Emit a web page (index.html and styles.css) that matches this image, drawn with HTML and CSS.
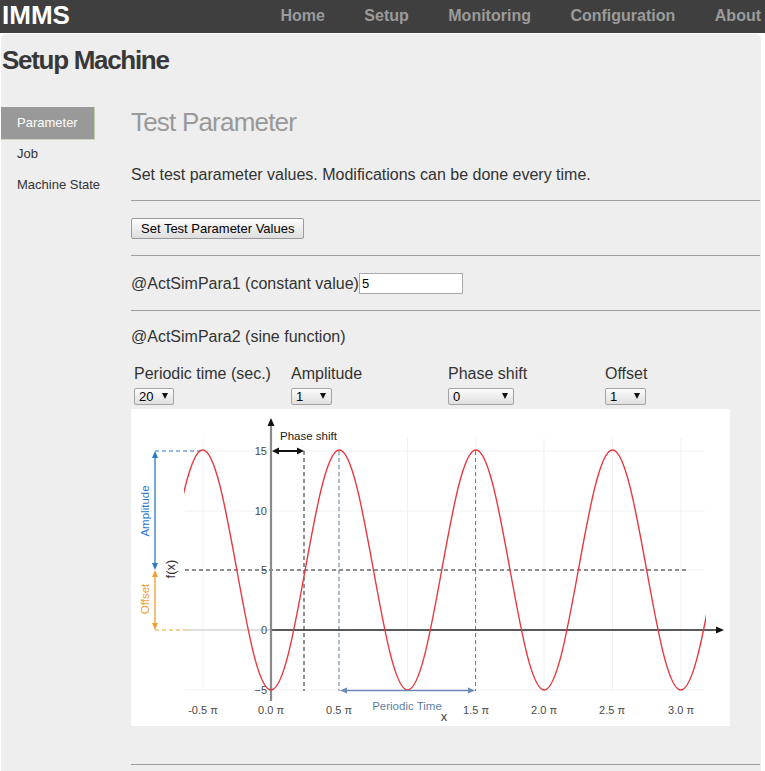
FILE: index.html
```html
<!DOCTYPE html>
<html lang="en">
<head>
<meta charset="utf-8">
<title>IMMS - Setup Machine</title>
<link rel="stylesheet" href="styles.css">
</head>
<body>
<header class="topbar">
  <div class="brand">IMMS</div>
  <nav class="nav">
    <a href="#">Home</a>
    <a href="#">Setup</a>
    <a href="#">Monitoring</a>
    <a href="#">Configuration</a>
    <a href="#">About</a>
  </nav>
</header>
<main class="panel">
  <h1 class="page-title">Setup Machine</h1>
  <div class="layout">
    <ul class="sidenav">
      <li class="sidenav-item active">Parameter</li>
      <li class="sidenav-item">Job</li>
      <li class="sidenav-item">Machine State</li>
    </ul>
    <section class="content">
      <h2 class="section-title">Test Parameter</h2>
      <p class="lead">Set test parameter values. Modifications can be done every time.</p>
      <hr class="rule rule-a">
      <button class="btn" type="button">Set Test Parameter Values</button>
      <hr class="rule rule-b">
      <div class="param-row">@ActSimPara1 (constant value)<input class="text-input" type="text" value="5"></div>
      <hr class="rule rule-c">
      <div class="param-title">@ActSimPara2 (sine function)</div>
      <div class="sine-grid">
        <div class="sine-cell">
          <div class="sine-label">Periodic time (sec.)</div>
          <span class="select sel-40"><select><option>20</option></select></span>
        </div>
        <div class="sine-cell">
          <div class="sine-label">Amplitude</div>
          <span class="select sel-41"><select><option>1</option></select></span>
        </div>
        <div class="sine-cell">
          <div class="sine-label">Phase shift</div>
          <span class="select sel-66"><select><option>0</option></select></span>
        </div>
        <div class="sine-cell">
          <div class="sine-label">Offset</div>
          <span class="select sel-41"><select><option>1</option></select></span>
        </div>
      </div>
      <svg class="chart" viewBox="131 409 599 317" width="599" height="317" xmlns="http://www.w3.org/2000/svg">
        <defs>
          <clipPath id="curveclip"><rect x="184" y="400" width="522" height="330"/></clipPath>
        </defs>
        <rect x="131" y="409" width="599" height="317" fill="#fff"/>
        <!-- grid -->
        <g stroke="#f1f1f1" stroke-width="1">
          <line x1="185" y1="451" x2="705" y2="451"/>
          <line x1="185" y1="511" x2="705" y2="511"/>
          <line x1="185" y1="570" x2="705" y2="570"/>
          <line x1="185" y1="690" x2="705" y2="690"/>
          <line x1="203" y1="438" x2="203" y2="690"/>
          <line x1="339" y1="438" x2="339" y2="690"/>
          <line x1="407.5" y1="438" x2="407.5" y2="690"/>
          <line x1="476" y1="438" x2="476" y2="690"/>
          <line x1="544" y1="438" x2="544" y2="690"/>
          <line x1="612.5" y1="438" x2="612.5" y2="690"/>
          <line x1="681" y1="438" x2="681" y2="690"/>
        </g>
        <line x1="185" y1="630" x2="271" y2="630" stroke="#dedede" stroke-width="2"/>
        <!-- offset guide -->
        <line x1="155" y1="630" x2="185" y2="630" stroke="#f0a030" stroke-width="1.2" stroke-dasharray="4 3"/>
        <line x1="155" y1="451" x2="203" y2="451" stroke="#2a78c8" stroke-width="1.2" stroke-dasharray="4 3"/>
        <!-- dashed helpers -->
        <line x1="185" y1="570" x2="687" y2="570" stroke="#222" stroke-width="1" stroke-dasharray="4 3"/>
        <line x1="304" y1="451" x2="304" y2="691" stroke="#222" stroke-width="1" stroke-dasharray="4 3"/>
        <line x1="339" y1="451" x2="339" y2="691" stroke="#5d7faa" stroke-width="1" stroke-dasharray="4 3"/>
        <line x1="475.5" y1="451" x2="475.5" y2="691" stroke="#5d7faa" stroke-width="1" stroke-dasharray="4 3"/>
        <!-- x axis -->
        <line x1="271" y1="630" x2="718" y2="630" stroke="#222" stroke-width="1.5"/>
        <polygon points="724,630 716,626.5 716,633.5" fill="#111"/>
        <!-- y axis -->
        <line x1="271" y1="424" x2="271" y2="701" stroke="#8a8a8a" stroke-width="2.2"/>
        <polygon points="271,418 267.5,426 274.5,426" fill="#111"/>
        <!-- curve -->
        <path clip-path="url(#curveclip)" fill="none" stroke="#e8383d" stroke-width="1.4"
          d="M168.55,570 C179.69,508.5 190.34,450 202.7,450 C215.06,450 225.71,508.5 236.85,570 C247.99,631.5 258.64,690 271,690 C283.36,690 294.01,631.5 305.15,570 C316.29,508.5 326.94,450 339.3,450 C351.66,450 362.31,508.5 373.45,570 C384.59,631.5 395.24,690 407.6,690 C419.96,690 430.61,631.5 441.75,570 C452.89,508.5 463.54,450 475.9,450 C488.26,450 498.91,508.5 510.05,570 C521.19,631.5 531.84,690 544.2,690 C556.56,690 567.21,631.5 578.35,570 C589.49,508.5 600.14,450 612.5,450 C624.86,450 635.51,508.5 646.65,570 C657.79,631.5 668.44,690 680.8,690 C693.16,690 703.81,631.5 714.95,570"/>
        <!-- phase shift arrow -->
        <line x1="276" y1="451" x2="299" y2="451" stroke="#111" stroke-width="2"/>
        <polygon points="272,451 279,447.5 279,454.5" fill="#111"/>
        <polygon points="304,451 297,447.5 297,454.5" fill="#111"/>
        <text x="280" y="440" class="ch-phase">Phase shift</text>
        <!-- periodic time arrow -->
        <line x1="344" y1="690.5" x2="471" y2="690.5" stroke="#6a8ab5" stroke-width="1.5"/>
        <polygon points="340,690.5 347,687.5 347,693.5" fill="#6a8ab5"/>
        <polygon points="475,690.5 468,687.5 468,693.5" fill="#6a8ab5"/>
        <text x="407" y="710" class="ch-period" text-anchor="middle">Periodic Time</text>
        <text x="444" y="721" class="ch-x" text-anchor="middle">x</text>
        <!-- amplitude arrow -->
        <line x1="155" y1="456" x2="155" y2="565" stroke="#2a78c8" stroke-width="1.3"/>
        <polygon points="155,451 152,458 158,458" fill="#2a78c8"/>
        <polygon points="155,570 152,563 158,563" fill="#2a78c8"/>
        <text transform="translate(149 511) rotate(-90)" class="ch-amp" text-anchor="middle">Amplitude</text>
        <!-- offset arrow -->
        <line x1="155" y1="575" x2="155" y2="625" stroke="#f0a030" stroke-width="1.3"/>
        <polygon points="155,570 152,577 158,577" fill="#f0a030"/>
        <polygon points="155,630 152,623 158,623" fill="#f0a030"/>
        <text transform="translate(149 599) rotate(-90)" class="ch-off" text-anchor="middle">Offset</text>
        <text transform="translate(175 569) rotate(-90)" class="ch-fx" text-anchor="middle">f(x)</text>
        <!-- y tick labels -->
        <g class="ch-tick" text-anchor="end">
          <text x="267" y="455">15</text>
          <text x="267" y="515">10</text>
          <text x="267" y="574">5</text>
          <text x="267" y="634">0</text>
          <text x="267" y="694">−5</text>
        </g>
        <!-- x tick labels -->
        <g class="ch-tick" text-anchor="middle">
          <text x="203" y="714">-0.5 π</text>
          <text x="271" y="714">0.0 π</text>
          <text x="339" y="714">0.5 π</text>
          <text x="476" y="714">1.5 π</text>
          <text x="544" y="714">2.0 π</text>
          <text x="612" y="714">2.5 π</text>
          <text x="681" y="714">3.0 π</text>
        </g>
      </svg>
      <hr class="rule rule-d">
    </section>
  </div>
</main>
</body>
</html>
```

FILE: styles.css
```css
* { box-sizing: border-box; }

html, body {
  margin: 0;
  padding: 0;
  background: #fff;
}

body {
  font-family: "Liberation Sans", Arial, sans-serif;
  color: #333;
  width: 765px;
  overflow: hidden;
}

.topbar {
  height: 33px;
  background: #3f3f3f;
  display: flex;
  align-items: flex-start;
  padding: 0 4px 0 2px;
}

.brand {
  font-size: 26px;
  font-weight: bold;
  color: #fff;
  line-height: 31px;
}

.nav {
  margin-left: auto;
  display: flex;
  gap: 39.5px;
}

.nav a {
  font-size: 16px;
  font-weight: bold;
  color: #9b9b9b;
  text-decoration: none;
  line-height: 31px;
}

.panel {
  display: block;
  margin: 1px 4px 0 1px;
  background: #eee;
  border-radius: 5px 5px 0 0;
  padding: 11px 1px 40px 0;
  min-height: 760px;
}

.page-title {
  margin: 0 0 32px 1px;
  font-size: 26px;
  line-height: 30px;
  font-weight: bold;
  letter-spacing: -1.3px;
  color: #383838;
}

.layout {
  display: flex;
  align-items: flex-start;
}

.sidenav {
  list-style: none;
  margin: 0;
  padding: 0;
  width: 130px;
  flex: none;
}

.sidenav-item {
  width: 94px;
  height: 31px;
  line-height: 30px;
  padding-left: 16px;
  font-size: 13px;
  color: #333;
  white-space: nowrap;
}

.sidenav-item.active {
  height: 32px;
  line-height: 32px;
  background: #999;
  color: #fff;
  border-right: 1px solid #bccfa9;
  box-shadow: 0 1px 0 #c9d6bd;
}

.content {
  flex: 1;
  min-width: 0;
}

.section-title {
  margin: 0;
  padding-top: 1px;
  font-size: 26px;
  line-height: 28px;
  font-weight: normal;
  letter-spacing: -0.8px;
  color: #999;
}

.lead {
  margin: 30px 0 0;
  font-size: 16px;
  line-height: 18px;
}

.rule {
  border: 0;
  border-top: 1px solid #9e9e9e;
  height: 0;
  margin: 0;
}

.rule-a { margin-top: 16px; }
.rule-b { margin-top: 16px; }
.rule-c { margin-top: 16px; }
.rule-d { margin-top: 38px; }

.btn {
  display: block;
  margin-top: 17px;
  height: 21px;
  padding: 0 9px;
  font-family: "Liberation Sans", Arial, sans-serif;
  font-size: 13px;
  color: #000;
  background: linear-gradient(#fdfdfd, #dedede);
  border: 1px solid #9a9a9a;
  border-radius: 2px;
}

.param-row {
  margin-top: 17px;
  display: flex;
  align-items: center;
  height: 21px;
  font-size: 16px;
}

.text-input {
  width: 104px;
  height: 21px;
  margin: 0;
  padding: 0 2px;
  font-family: "Liberation Sans", Arial, sans-serif;
  font-size: 13px;
  color: #000;
  background: #fff;
  border: 1px solid #a9a9a9;
}

.param-title {
  margin-top: 17px;
  font-size: 16px;
  line-height: 18px;
}

.sine-grid {
  margin: 19px 0 0 3px;
  display: grid;
  grid-template-columns: repeat(4, 157px);
}

.sine-label {
  font-size: 16px;
  line-height: 18px;
}

.select {
  position: relative;
  display: block;
  margin-top: 5px;
  height: 17px;
}

.sel-40 { width: 40px; }
.sel-41 { width: 41px; }
.sel-66 { width: 66px; }

.select select {
  -webkit-appearance: none;
  appearance: none;
  display: block;
  width: 100%;
  height: 17px;
  margin: 0;
  padding: 0 0 0 4px;
  font-family: "Liberation Sans", Arial, sans-serif;
  font-size: 13px;
  line-height: 15px;
  color: #000;
  background: linear-gradient(#fcfcfc, #dfdfdf);
  border: 1px solid #a3a3a3;
  border-radius: 2px;
}

.select::after {
  content: "";
  position: absolute;
  right: 6px;
  top: 5px;
  border-left: 3px solid transparent;
  border-right: 3px solid transparent;
  border-top: 6px solid #111;
  pointer-events: none;
}

.chart {
  display: block;
  margin-top: 4px;
  width: 599px;
  height: 317px;
}

.ch-tick {
  font-family: "Liberation Sans", Arial, sans-serif;
  font-size: 11px;
  fill: #4a4a4a;
}

.ch-phase {
  font-family: "Liberation Sans", Arial, sans-serif;
  font-size: 11.5px;
  fill: #1a1a1a;
}

.ch-period {
  font-family: "Liberation Sans", Arial, sans-serif;
  font-size: 11.5px;
  fill: #5d7faa;
}

.ch-x {
  font-family: "Liberation Sans", Arial, sans-serif;
  font-size: 13px;
  fill: #444;
}

.ch-amp {
  font-family: "Liberation Sans", Arial, sans-serif;
  font-size: 11.5px;
  fill: #2a78c8;
}

.ch-off {
  font-family: "Liberation Sans", Arial, sans-serif;
  font-size: 11.5px;
  fill: #f0a030;
}

.ch-fx {
  font-family: "Liberation Sans", Arial, sans-serif;
  font-size: 13px;
  fill: #333;
}
```
